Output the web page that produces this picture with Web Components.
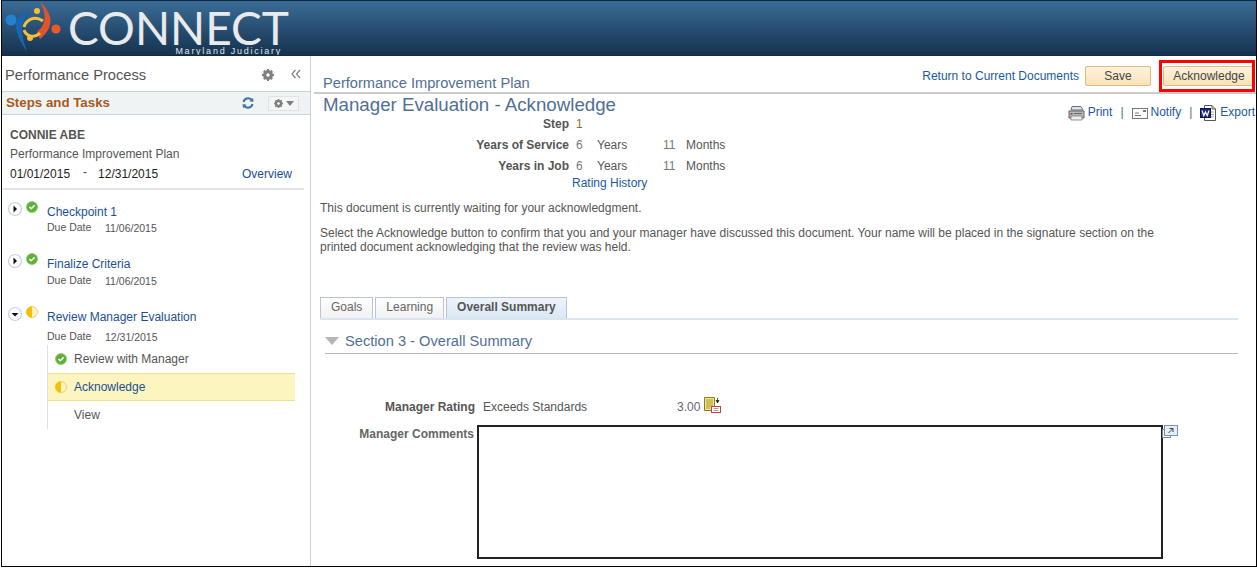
<!DOCTYPE html>
<html>
<head>
<meta charset="utf-8">
<title>Connect</title>
<style>
    html, body { margin: 0; padding: 0; background: #fff; overflow: hidden; }
    body { font: 12px "Liberation Sans", Arial, sans-serif; color: #555; }
</style>
</head>
<body>
<app-shell></app-shell>

<script>
// small shared icons
const ICONS = {
    check: `<svg width="12" height="12" viewBox="0 0 12 12"><circle cx="6" cy="6" r="5.6" fill="#5cb035"/><circle cx="6" cy="6" r="5.4" fill="none" stroke="#86c766" stroke-width=".8"/><path d="M3.4 6 5.2 7.800 8.600 4.400" fill="none" stroke="#fff" stroke-width="1.500"/></svg>`,
    half: `<svg width="12" height="12" viewBox="0 0 12 12"><circle cx="6" cy="6" r="5.5" fill="#fdf3c8" stroke="#f0c040" stroke-width=".8"/><path d="M6 .4A5.6 5.6 0 0 0 6 11.6Z" fill="#f6c000"/></svg>`,
    gear: `<svg width="12" height="12" viewBox="0 0 12 12"><circle cx="6" cy="6" r="3.6" fill="none" stroke="#808080" stroke-width="2.800"/><path d="M6 0V12M0 6H12M1.800 1.800 10.200 10.200M10.200 1.800 1.800 10.200" stroke="#808080" stroke-width="2"/><circle cx="6" cy="6" r="1.700" fill="#fff"/></svg>`
};

class SiteHeader extends HTMLElement {
    constructor() {
        super();
        this.attachShadow({mode: 'open'}).innerHTML = `
            <style>
                :host { display: flex; height: 56px; box-sizing: border-box; background: linear-gradient(#3b6c96, #15324f); border-top: 1px solid #10283f; border-bottom: 1px solid #0f2a44; overflow: hidden; }
                svg { flex: none; margin-top: -1px; }
                .brand { display: flex; flex-direction: column; align-items: flex-end; margin-left: -2px; }
                .name { font: 46px/40px "Lato", sans-serif; color: #e8eaec; margin-top: 7px; }
                .sub { font: 9px/8px "Liberation Sans", sans-serif; color: #e0e4e8; letter-spacing: 1.750px; margin: -1px 7px 0 0; }
            </style>
            <svg width="68" height="56" viewBox="0 0 68 56">
                <circle cx="9" cy="20" r="5.500" fill="#2480d0"/>
                <path d="M28 9C18 13 13 20 14 28 15 36 20 44 25 52 22 42 19 34 20 27 21 20 24 14 28 9Z" fill="#1b64b0"/>
                <path d="M38 2C44 12 44 22 39 28L35 32 38 39C46 33 50 24 48 17 46 10 42 5 38 2Z" fill="#e2532a"/>
                <circle cx="54" cy="29" r="4.600" fill="#e85a28"/>
                <path d="M22 27C24 20 32 15 41 21" fill="none" stroke="#f3bd3d" stroke-width="3"/>
                <circle cx="35" cy="11" r="3" fill="#f3bd3d"/>
                <path d="M22 30C24 36 32 39 38 33" fill="none" stroke="#f3bd3d" stroke-width="3"/>
                <circle cx="28" cy="38" r="3" fill="#f3bd3d"/>
            </svg>
            <div class="brand">
                <span class="name">CONNECT</span>
                <span class="sub">Maryland Judiciary</span>
            </div>
        `;
    }
}

class StepItem extends HTMLElement {
    constructor() {
        super();
        const open = this.hasAttribute('open');
        const arrow = open
            ? '<path d="M4.500 7 8 10.500 11.500 7Z" fill="#111"/>'
            : '<path d="M6.500 4.500 10 8 6.500 11.500Z" fill="#111"/>';
        const status = this.getAttribute('status') === 'half' ? ICONS.half : ICONS.check;
        this.attachShadow({mode: 'open'}).innerHTML = `
            <style>
                :host { display: grid; grid-template-columns: 14px 12px 1fr; column-gap: 4px; padding-left: 6px; align-items: start; }
                .toggle { margin-left: -1px; }
                .state { height: 12px; }
                .title { color: #1a4f95; font-size: 12px; line-height: 14px; margin: 4px 0 0 5px; }
                .due { grid-column: 3; margin: 1px 0 0 5px; display: flex; font-size: 10.500px; line-height: 14px; color: #555; }
                .due b { font-weight: normal; width: 58px; }
                .due span { position: relative; top: 1px; }
                .kids { grid-column: 3; margin-left: 5px; }
            </style>
            <svg class="toggle" width="16" height="16" viewBox="0 0 16 16"><circle cx="8" cy="8" r="6.500" fill="#fff" stroke="#c5d0e0" stroke-width="1.200"/>${arrow}</svg>
            <span class="state">${status}</span>
            <div class="title">${this.getAttribute('label')}</div>
            <div class="due" style="${this.getAttribute('due-style') || ''}"><b>Due Date</b><span>${this.getAttribute('due')}</span></div>
            <div class="kids"><slot></slot></div>
        `;
    }
}

class SubStep extends HTMLElement {
    constructor() {
        super();
        const icon = {check: ICONS.check, half: ICONS.half}[this.getAttribute('status')] || '';
        this.attachShadow({mode: 'open'}).innerHTML = `
            <style>
                :host { display: flex; align-items: center; height: 28px; box-sizing: border-box; padding-left: 7px; gap: 7px; color: #555; }
                :host([active]) { background: #fdf5bf; border-top: 1px solid #f2df8e; border-bottom: 1px solid #f2df8e; color: #1a4f95; }
                .i { width: 12px; height: 12px; }
            </style>
            <span class="i">${icon}</span><slot></slot>
        `;
    }
}

class SidePanel extends HTMLElement {
    constructor() {
        super();
        this.attachShadow({mode: 'open'}).innerHTML = `
            <style>
                :host { display: block; width: 308px; flex: none; border-right: 1px solid #c8d1dc; }
                .top { display: flex; align-items: center; box-sizing: border-box; height: 35px; padding: 3px 9px 0 3px; font-size: 14.700px; color: #555; }
                .top span { flex: 1; }
                .top .gear { flex: none; height: 12px; margin-top: -2px; }
                .chev { margin: -2px 0 0 17px; }
                .bar { display: flex; align-items: center; height: 22px; padding: 0 11px 0 4px; background: #eff3f4; border-top: 1px solid #c8d1d8; border-bottom: 1px solid #c8d1d8; }
                .bar b { flex: 1; color: #a65a1e; font-size: 13.300px; position: relative; top: -1px; }
                .menu { display: flex; align-items: center; justify-content: center; gap: 3px; width: 29px; height: 13px; margin-left: 14px; border: 1px solid #dfe3e5; background: #f4f6f6; }
                .menu i { border: 4px solid transparent; border-top: 5px solid #7f7f7f; border-bottom: 0; }
                .who { padding: 13px 0 0 8px; margin-right: 15px; line-height: 20px; }
                .who b { display: block; line-height: 15px; margin-bottom: 1px; }
                .dates { display: flex; color: #222; }
                .dates .dash { margin: -2px 11px 0 13px; color: #444; }
                .dates .over { margin-left: auto; color: #1a4f95; margin-right: 3px; }
                .rule { height: 2px; background: #e3e3e3; margin: 4px 6px 0 1px; }
                .steps { display: flex; flex-direction: column; gap: 19px; padding-top: 11px; }
                .subs { margin-top: 2px; border-left: 1px solid #e0e0e0; width: 247px; }
            </style>
            <div class="top">
                <span>Performance Process</span>
                <span class="gear">${ICONS.gear}</span>
                <svg class="chev" width="10" height="10" viewBox="0 0 10 10"><path d="M4.500 1 1 5 4.500 9M9 1 5.500 5 9 9" fill="none" stroke="#7f7f7f" stroke-width="1.200"/></svg>
            </div>
            <div class="bar">
                <b>Steps and Tasks</b>
                <svg width="12" height="12" viewBox="0 0 12 12"><path d="M1.500 5A4.600 4.600 0 0 1 9.600 3" fill="none" stroke="#41729f" stroke-width="2"/><path d="M7.500 4.500 11.500 4.800 11 .8Z" fill="#41729f"/><path d="M10.500 7A4.600 4.600 0 0 1 2.400 9" fill="none" stroke="#41729f" stroke-width="2"/><path d="M4.500 7.500 .5 7.200 1 11.200Z" fill="#41729f"/></svg>
                <div class="menu">${ICONS.gear.replace('width="12" height="12"', 'width="9" height="9"')}<i></i></div>
            </div>
            <div class="who">
                <b>CONNIE ABE</b>
                <div>Performance Improvement Plan</div>
                <div class="dates"><span>01/01/2015</span><span class="dash">-</span><span>12/31/2015</span><span class="over">Overview</span></div>
            </div>
            <div class="rule"></div>
            <div class="steps">
                <step-item status="check" label="Checkpoint 1" due="11/06/2015"></step-item>
                <step-item status="check" label="Finalize Criteria" due="11/06/2015" due-style="margin-top:2px"></step-item>
                <step-item status="half" open label="Review Manager Evaluation" due="12/31/2015" due-style="margin-top:5px">
                    <div class="subs">
                        <sub-step status="check">Review with Manager</sub-step>
                        <sub-step status="half" active>Acknowledge</sub-step>
                        <sub-step>View</sub-step>
                    </div>
                </step-item>
            </div>
        `;
    }
}

class ActionButton extends HTMLElement {
    constructor() {
        super();
        this.attachShadow({mode: 'open'}).innerHTML = `
            <style>
                :host { display: flex; align-items: center; justify-content: center; box-sizing: border-box; height: 20px; background: linear-gradient(#fdf3dc, #fbe2b8); border: 1px solid #e4b77c; border-radius: 2px; color: #444; font-size: 12px; }
            </style>
            <slot></slot>
        `;
    }
}

class ToolLinks extends HTMLElement {
    constructor() {
        super();
        this.attachShadow({mode: 'open'}).innerHTML = `
            <style>
                :host { display: flex; justify-content: flex-end; align-items: center; height: 14px; color: #1a5a9e; font-size: 12px; }
                .sep { margin: 0 8px; color: #4a6f96; }
                svg { margin: 2px 3px 0 0; }
            </style>
            <svg width="17" height="16" viewBox="0 0 17 16"><path d="M4 1.500H13L15 5H3Z" fill="#dfe6ea" stroke="#60707c"/><path d="M1 6H16V13H1Z" fill="#b5babd" stroke="#5f6468"/><path d="M3 11H14V15H3Z" fill="#eee" stroke="#6b6b6b" stroke-width=".7"/><rect x="2.500" y="8" width="2" height="1.500" fill="#b4352d"/><rect x="6" y="8" width="8" height="1" fill="#666"/></svg>
            <span>Print</span><span class="sep">|</span>
            <svg width="16" height="11" viewBox="0 0 16 11"><rect x=".5" y=".5" width="15" height="10" fill="#fff" stroke="#777"/><path d="M3 5H7M3 7.500H9" stroke="#777"/><rect x="11" y="2" width="3" height="2" fill="#777"/></svg>
            <span>Notify</span><span class="sep">|</span>
            <svg width="17" height="16" viewBox="0 0 17 16"><path d="M4.500 .5H12L15.500 4V15.500H4.500Z" fill="#fff" stroke="#555"/><path d="M12 .5V4H15.500" fill="none" stroke="#555"/><path d="M10 7H14M10 9.500H14M10 12H14" stroke="#aaa"/><rect x=".5" y="3.500" width="10" height="9" fill="#1a2a8a" stroke="#0b1246"/><path d="M2 5.500 3.800 10.700 5.500 7 7.200 10.700 9 5.500" fill="none" stroke="#fff" stroke-width="1.200"/></svg>
            <span>Export</span>
        `;
    }
}

class TabBar extends HTMLElement {
    constructor() {
        super();
        this.attachShadow({mode: 'open'}).innerHTML = `
            <style>
                :host { display: flex; gap: 2px; height: 21px; border-bottom: 2px solid #dbe5f1; margin: 43px 18px 0 9px; }
                div { display: flex; align-items: center; padding: 0 10px 2px; box-sizing: border-box; height: 21px; border: 1px solid #b9c4d4; border-bottom: 0; background: linear-gradient(#fff, #f1f1f1); color: #666; }
                .on { background: linear-gradient(#eef3fa, #dbe7f5); font-weight: bold; color: #555; }
            </style>
            <div>Goals</div><div>Learning</div><div class="on">Overall Summary</div>
        `;
    }
}

class MainPanel extends HTMLElement {
    constructor() {
        super();
        this.attachShadow({mode: 'open'}).innerHTML = `
            <style>
                :host { display: block; flex: 1; min-width: 0; overflow: hidden; }
                .head { display: flex; align-items: flex-end; height: 36px; margin-left: 3px; border-bottom: 2px solid #cbcbcb; }
                .plan { flex: 1; padding-left: 9px; font-size: 14.650px; line-height: 18px; color: #516f95; }
                .ret { color: #1a5a9e; margin: 0 6px 9px 0; line-height: 14px; }
                .save { width: 66px; margin-bottom: 6px; }
                .mark { box-sizing: border-box; width: 96px; height: 32px; margin: 0 1px 0 8px; border: 3px solid #f00; padding: 3px 0 0 1px; overflow: hidden; }
                .mark action-button { width: 90px; padding-left: 2px; }
                .title { font-size: 18.700px; line-height: 22px; color: #516f95; padding-left: 12px; height: 22px; }
                tool-links { margin: -4px 1px 0 0; height: 0; overflow: visible; }
                .facts { display: grid; grid-template-columns: 249px 28px 66px 1fr; margin: 1px 0 0 9px; align-items: center; grid-auto-rows: 21px; }
                .facts b { text-align: right; color: #555; }
                .facts .n { padding-left: 7px; }
                .facts .ym { display: flex; }
                .num { color: #777; }
                .hist { color: #1a5a9e; margin: 0 0 0 261px; line-height: 14px; height: 14px; }
                .msg { margin: 11px 0 0 9px; width: 860px; line-height: 14px; color: #555; }
                .msg p { margin: 0 0 11px; }
                .section { display: flex; align-items: center; gap: 6px; box-sizing: border-box; height: 34px; padding-top: 8px; margin: 0 18px 0 14px; border-bottom: 1px solid #b8b8b8; font-size: 14.650px; color: #516f95; }
                .tri { border: 7px solid transparent; border-top: 8px solid #b5b5b5; border-bottom: 0; }
                .rate { display: grid; grid-template-columns: 164px 166px 1fr; margin-top: 44px; height: 18px; align-items: center; }
                .rate b { text-align: right; color: #555; }
                .rate .val { padding-left: 8px; }
                .rate .score { display: flex; align-items: center; gap: 4px; margin-left: 36px; color: #666; }
                .rate svg { margin-top: -4px; }
                .comments { display: flex; align-items: flex-start; margin-top: 9px; }
                .comments b { width: 163px; text-align: right; color: #666; line-height: 16px; padding-top: 1px; }
                .box { width: 686px; height: 134px; box-sizing: border-box; border: 2px solid #222; margin-left: 3px; background: #fff; }
                .expand { margin-left: -1px; }
            </style>
            <div class="head">
                <div class="plan">Performance Improvement Plan</div>
                <div class="ret">Return to Current Documents</div>
                <action-button class="save">Save</action-button>
                <div class="mark"><action-button>Acknowledge</action-button></div>
            </div>
            <div class="title">Manager Evaluation - Acknowledge</div>
            <tool-links></tool-links>
            <div class="facts">
                <b>Step</b><span class="n" style="color:#8a6a3a">1</span><span></span><span></span>
                <b>Years of Service</b><span class="n num">6</span><span>Years</span><span class="ym"><span class="num" style="width:23px">11</span><span>Months</span></span>
                <b>Years in Job</b><span class="n num">6</span><span>Years</span><span class="ym"><span class="num" style="width:23px">11</span><span>Months</span></span>
            </div>
            <div class="hist">Rating History</div>
            <div class="msg">
                <p>This document is currently waiting for your acknowledgment.</p>
                <p>Select the Acknowledge button to confirm that you and your manager have discussed this document. Your name will be placed in the signature section on the printed document acknowledging that the review was held.</p>
            </div>
            <tab-bar></tab-bar>
            <div class="section"><i class="tri"></i><span>Section 3 - Overall Summary</span></div>
            <div class="rate">
                <b>Manager Rating</b><span class="val">Exceeds Standards</span>
                <span class="score">3.00
                    <svg width="17" height="16" viewBox="0 0 17 16"><path d="M.5.5H10.500V13.500H.5Z" fill="#f8e98c" stroke="#8c7a1a"/><path d="M2 3H9M2 5H9M2 7H9M2 9H9M2 11H6" stroke="#8c7a1a" stroke-width=".8"/><path d="M13.500 1V4M12 3 13.500 6 15 3" fill="#222" stroke="#222" stroke-width=".8"/><rect x="7.500" y="9.500" width="9" height="6" fill="#fff" stroke="#c2413a"/><path d="M9.500 11.500H14.500M9.500 13.500H14.500" stroke="#888" stroke-width=".8"/></svg>
                </span>
            </div>
            <div class="comments">
                <b>Manager Comments</b>
                <div class="box"></div>
                <svg class="expand" width="16" height="14" viewBox="0 0 16 14"><rect x=".5" y="4.500" width="8" height="8" fill="#fff" stroke="#7a8a99"/><rect x="2.500" y=".5" width="13" height="10" fill="#e8eef5" stroke="#6f95c4"/><path d="M6.500 8 11 3.500M7.500 3.500H11V7" fill="none" stroke="#444"/></svg>
            </div>
        `;
    }
}

class AppShell extends HTMLElement {
    constructor() {
        super();
        this.attachShadow({mode: 'open'}).innerHTML = `
            <style>
                :host { display: flex; flex-direction: column; box-sizing: border-box; width: 1256px; height: 567px; margin-left: 1px; border-left: 1px solid #000; border-right: 1px solid #000; border-bottom: 1px solid #000; overflow: hidden; background: #fff; }
                .body { display: flex; flex: 1; min-height: 0; }
            </style>
            <site-header></site-header>
            <div class="body">
                <side-panel></side-panel>
                <main-panel></main-panel>
            </div>
        `;
    }
}

customElements.define('site-header', SiteHeader);
customElements.define('step-item', StepItem);
customElements.define('sub-step', SubStep);
customElements.define('side-panel', SidePanel);
customElements.define('action-button', ActionButton);
customElements.define('tool-links', ToolLinks);
customElements.define('tab-bar', TabBar);
customElements.define('main-panel', MainPanel);
customElements.define('app-shell', AppShell);
</script>
</body>
</html>
